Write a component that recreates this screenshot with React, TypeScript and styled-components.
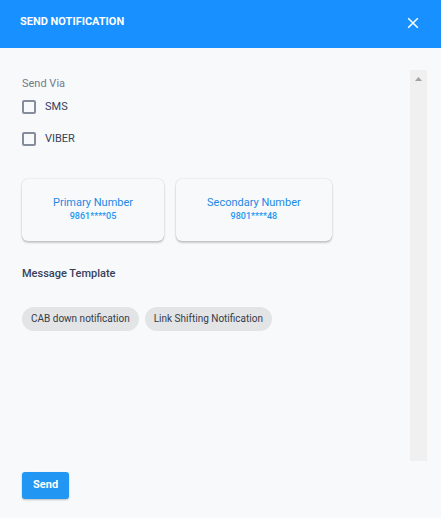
import React from "react";
import styled, { createGlobalStyle } from "styled-components";

const GlobalStyle = createGlobalStyle`
  *, *::before, *::after { box-sizing: border-box; }
  body {
    margin: 0;
    background: #f7f9fb;
    color: #37415a;
    font-family: Roboto, "Liberation Sans", sans-serif;
    font-size: 11px;
    line-height: 14px;
  }
  button { font: inherit; cursor: pointer; }
`;

const Dialog = styled.form`
  display: flex;
  flex-direction: column;
  min-height: 100vh;
`;

const Header = styled.header`
  display: flex;
  align-items: center;
  justify-content: space-between;
  height: 48px;
  padding: 0 20px 2px;
  background: #1890ff;
  color: #fff;
`;

const Title = styled.h1`
  margin: 0;
  padding-bottom: 2px;
  font-size: 11px;
  line-height: 14px;
  font-weight: 700;
`;

const CloseButton = styled.button`
  display: flex;
  padding: 0;
  margin: 0;
  border: 0;
  background: none;
  color: #fff;
`;

const Body = styled.div`
  display: flex;
  flex: 1;
  justify-content: space-between;
  margin: 22px 14px 0 22px;
`;

const Content = styled.div`
  flex: 1;
  min-width: 0;
  padding-top: 7px;
`;

const ScrollTrack = styled.div`
  display: flex;
  justify-content: center;
  flex: none;
  width: 17px;
  padding-top: 7px;
  background: #f0f0f0;
`;

const Options = styled.fieldset`
  margin: 0;
  padding: 0;
  border: 0;
`;

const Legend = styled.legend`
  padding: 0;
  color: #747b8b;
`;

const Option = styled.label`
  display: flex;
  align-items: center;
  gap: 9px;
  height: 32px;
  cursor: pointer;
`;

const Checkbox = styled.input`
  appearance: none;
  width: 14px;
  height: 14px;
  margin: 0;
  border: 2px solid #858d9d;
  border-radius: 2px;
  &:checked { background: #2196f3; border-color: #2196f3; }
`;

const Cards = styled.div`
  display: flex;
  flex-wrap: wrap;
  gap: 12px;
  margin-top: 24px;
`;

const Card = styled.button`
  display: flex;
  flex-direction: column;
  align-items: center;
  padding: 17px 31px 18px;
  border: 0;
  border-radius: 6px;
  background: #f7f9fb;
  color: #1e88e5;
  box-shadow: 0 0 2px rgba(0, 0, 0, 0.16), 0 2px 2px rgba(0, 0, 0, 0.18);
`;

const Phone = styled.span`
  color: #2196f3;
  font-size: 9px;
  line-height: 13px;
  font-weight: 500;
`;

const SectionTitle = styled.h2`
  margin: 26px 0 0;
  font-size: 11px;
  line-height: 14px;
  font-weight: 500;
`;

const Chips = styled.div`
  display: flex;
  flex-wrap: wrap;
  gap: 6px;
  margin-top: 26px;
`;

const Chip = styled.button`
  height: 24px;
  padding: 0 9px;
  border: 0;
  border-radius: 12px;
  background: #e2e4e6;
  color: #353b49;
  font-size: 10px;
  line-height: 24px;
`;

const Footer = styled.footer`
  padding: 11px 22px 19px;
`;

const SendButton = styled.button`
  height: 27px;
  padding: 0 11px 2px;
  border: 0;
  border-radius: 3px;
  background: #2196f3;
  color: #fff;
  font-weight: 700;
  box-shadow: 0 1px 2px rgba(0, 0, 0, 0.24);
`;

const channels = ["SMS", "VIBER"];
const numbers = [
  { label: "Primary Number", phone: "9861****05" },
  { label: "Secondary Number", phone: "9801****48" },
];
const templates = ["CAB down notification", "Link Shifting Notification"];

export default function App() {
  return (
    <>
      <GlobalStyle />
      <Dialog onSubmit={(event) => event.preventDefault()}>
        <Header>
          <Title>SEND NOTIFICATION</Title>
          <CloseButton type="button" aria-label="Close">
            <svg width="16" height="16" viewBox="0 0 16 16" fill="none" stroke="currentColor" strokeWidth="1.5">
              <path d="M3.2 3.2l9.6 9.6M12.8 3.2l-9.6 9.6" />
            </svg>
          </CloseButton>
        </Header>
        <Body>
          <Content>
            <Options>
              <Legend>Send Via</Legend>
              {channels.map((channel) => (
                <Option key={channel}>
                  <Checkbox type="checkbox" name="channel" value={channel} />
                  {channel}
                </Option>
              ))}
            </Options>
            <Cards>
              {numbers.map(({ label, phone }) => (
                <Card type="button" key={label}>
                  <span>{label}</span>
                  <Phone>{phone}</Phone>
                </Card>
              ))}
            </Cards>
            <SectionTitle>Message Template</SectionTitle>
            <Chips>
              {templates.map((template) => (
                <Chip type="button" key={template}>{template}</Chip>
              ))}
            </Chips>
          </Content>
          <ScrollTrack aria-hidden="true">
            <svg width="7" height="4" viewBox="0 0 7 4" fill="#a3a3a3">
              <path d="M3.5 0L7 4H0z" />
            </svg>
          </ScrollTrack>
        </Body>
        <Footer>
          <SendButton type="submit">Send</SendButton>
        </Footer>
      </Dialog>
    </>
  );
}
